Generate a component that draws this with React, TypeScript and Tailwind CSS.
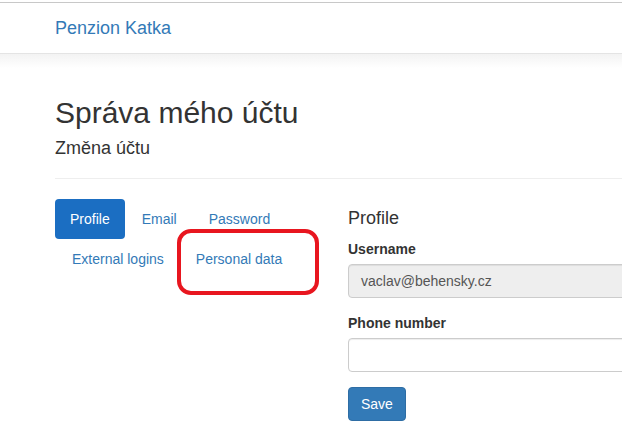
import React from "react";

export default function App() {
  const font = { fontFamily: '"Liberation Sans", Arial, sans-serif' };
  return (
    <div className="relative w-[622px] h-[439px] overflow-hidden bg-white text-[14px] leading-[20px] text-[#333]" style={font}>
      {/* top line */}
      <div className="h-[2px] bg-white" />
      <div className="h-px bg-[#c8c8c8]" />
      {/* navbar */}
      <div className="h-[51px] border-b border-[#e4e4e4] bg-white pl-[55px] flex items-center">
        <span className="text-[18px] leading-[20px] text-[#337ab7]">Penzion Katka</span>
      </div>
      {/* shadow + spacer */}
      <div className="h-[42px] bg-[linear-gradient(to_bottom,#f3f3f3_0px,#ffffff_14px)]" />

      <div className="pl-[55px] w-[1200px]">
        <h1 className="text-[30px] leading-[33px] font-normal m-0 text-[#333]">Správa mého účtu</h1>
        <h4 className="text-[18px] leading-[20px] font-normal mt-[9px] mb-0 text-[#333]">Změna účtu</h4>
        <div className="mt-[20px] mb-[20px] h-px bg-[#eee] w-[900px]" />

        <div className="flex">
          {/* left column */}
          <div className="w-[263px] shrink-0">
            <ul className="flex flex-wrap list-none m-0 p-0">
              <li>
                <a className="block px-[15px] py-[10px] rounded-[4px] bg-[#1b6ec2] text-white">Profile</a>
              </li>
              <li className="ml-[2px]">
                <a className="block px-[15px] py-[10px] text-[#337ab7]">Email</a>
              </li>
              <li className="ml-[2px]">
                <a className="block px-[15px] py-[10px] text-[#337ab7]">Password</a>
              </li>
              <li className="ml-[2px]">
                <a className="block px-[15px] py-[10px] text-[#337ab7]">External logins</a>
              </li>
              <li className="ml-[2px]">
                <a className="block px-[15px] py-[10px] text-[#337ab7]">Personal data</a>
              </li>
            </ul>
          </div>
          <div className="w-[30px] shrink-0" />
          {/* right column */}
          <div className="w-[409px] shrink-0">
            <h4 className="text-[18px] leading-[20px] font-normal mt-[9px] mb-[11px] text-[#333]">Profile</h4>
            <div className="mb-[15px]">
              <label className="inline-block font-bold mb-[5px]">Username</label>
              <div className="h-[34px] px-[12px] flex items-center rounded-[4px] border border-[#ccc] bg-[#eee] text-[#555] shadow-[inset_0_1px_1px_rgba(0,0,0,0.075)]">
                vaclav@behensky.cz
              </div>
            </div>
            <div className="mb-[15px]">
              <label className="inline-block font-bold mb-[5px]">Phone number</label>
              <div className="h-[34px] px-[12px] rounded-[4px] border border-[#ccc] bg-white shadow-[inset_0_1px_1px_rgba(0,0,0,0.075)]" />
            </div>
            <button className="h-[34px] px-[12px] rounded-[4px] border border-[#2e6da4] bg-[#337ab7] text-white text-[14px]" style={font}>
              Save
            </button>
          </div>
        </div>
      </div>

      {/* red annotation */}
      <div className="absolute left-[177px] top-[229px] w-[142px] h-[66px] border-[4px] border-[#e8161f] rounded-[14px]" />
    </div>
  );
}
